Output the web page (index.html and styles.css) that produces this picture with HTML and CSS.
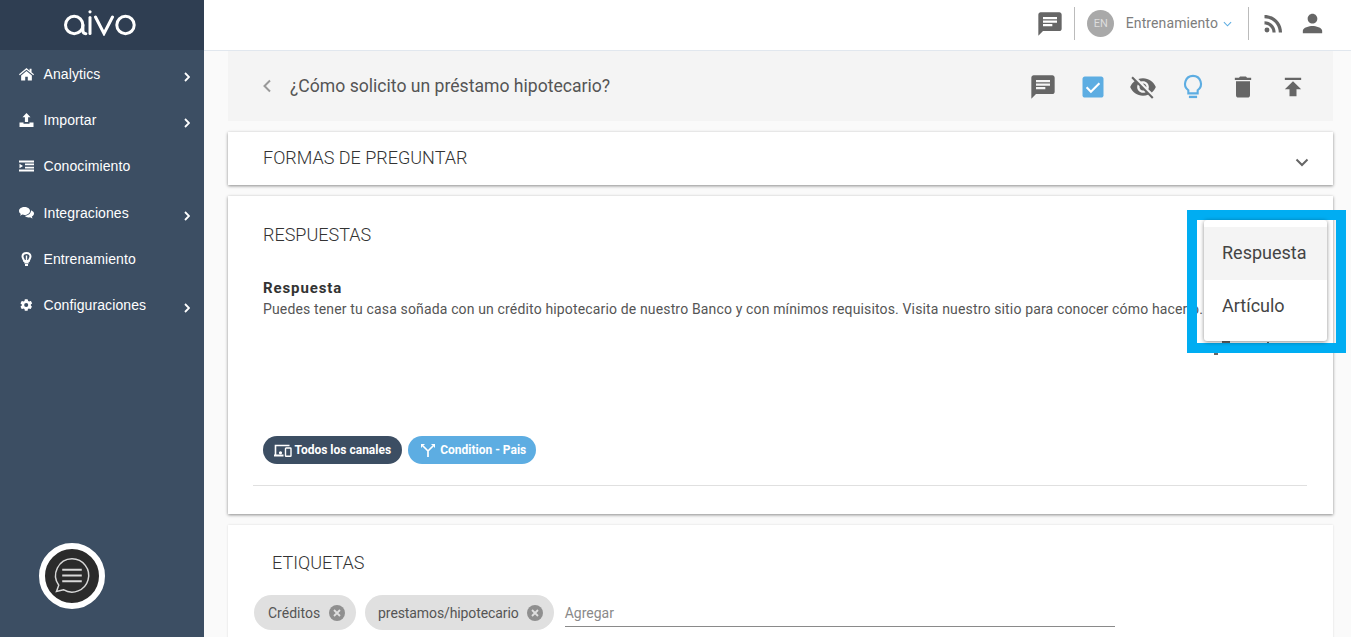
FILE: index.html
```html
<!DOCTYPE html>
<html lang="es">
<head>
<meta charset="utf-8">
<title>Aivo</title>
<link rel="stylesheet" href="styles.css">
</head>
<body>
<div class="app">
  <aside class="sidebar">
    <div class="brand">
      <svg class="logo" width="74" height="26" viewBox="0 0 74 26" fill="none" stroke="#fff" stroke-width="3" stroke-linecap="round" aria-label="aivo">
        <circle cx="10.200" cy="15" r="8.700"/>
        <path d="M18.900 15v5.500q0 3 3 3.200"/>
        <path d="M26 7.500v16"/>
        <circle cx="26" cy="1.800" r="1.600" fill="#fff" stroke="none"/>
        <path d="M31.500 7 40 23.500 48.500 7"/>
        <circle cx="61.500" cy="15" r="8.700"/>
      </svg>
    </div>
    <nav class="nav">
      <a class="nav-item"><svg class="nav-icon" viewBox="0 0 14 12"><path fill="#fff" d="M7 .5 0 6.300l.7.9L7 2l6.300 5.200.7-.9-2.300-1.900V1h-1.800v2.000zM2 7.300V12h3.800V8.500h2.400V12H12V7.300L7 3.200z"/></svg><span class="nav-label">Analytics</span><svg class="caret" viewBox="0 0 6 10"><path d="M1 1l4 4-4 4" fill="none" stroke="#fff" stroke-width="1.800"/></svg></a>
      <a class="nav-item"><svg class="nav-icon" viewBox="0 0 14 14"><path fill="#fff" d="M7 0 3 4.200h2.400V9h3.200V4.200H11zM0 9.500h4v1.200h6V9.500h4V14H0z"/></svg><span class="nav-label">Importar</span><svg class="caret" viewBox="0 0 6 10"><path d="M1 1l4 4-4 4" fill="none" stroke="#fff" stroke-width="1.800"/></svg></a>
      <a class="nav-item"><svg class="nav-icon" viewBox="0 0 15 11"><path fill="#fff" d="M0 0h15v2H0zM6 3h9v1.800H6zM6 6.200h9V8H6zM0 9h15v2H0zM.5 3.200 4 5.500.5 7.800z"/></svg><span class="nav-label">Conocimiento</span></a>
      <a class="nav-item"><svg class="nav-icon" viewBox="0 0 15 12"><path fill="#fff" d="M5.500 0C2.500 0 0 1.700 0 3.900c0 1.200.7 2.200 1.800 3L1 8.800l2.400-1.200c.7.200 1.400.3 2.100.3 3 0 5.500-1.700 5.500-4S8.500 0 5.500 0zM12 3.500c.1 3-2.800 5.100-6.200 5.300C6.600 9.900 8 10.400 9.500 10.400c.5 0 1-.1 1.500-.2l2.500 1.300-.7-1.900c1.300-.8 2.200-2 2.200-3.200 0-1.100-1-2.100-2.500-2.900z"/></svg><span class="nav-label">Integraciones</span><svg class="caret" viewBox="0 0 6 10"><path d="M1 1l4 4-4 4" fill="none" stroke="#fff" stroke-width="1.800"/></svg></a>
      <a class="nav-item"><svg class="nav-icon bulb" viewBox="0 0 14 14"><path fill="none" stroke="#fff" stroke-width="2" d="M7 1C4.500 1 3 2.700 3 4.600c0 1.700 1.400 2.700 1.700 4.400h4.600C9.600 7.300 11 6.300 11 4.600 11 2.700 9.500 1 7 1z"/><path fill="#fff" d="M4.800 10h4.400v1.400H4.800zM5.500 12h3v2h-3zM6.300 3.500h1.400v5H6.300z"/></svg><span class="nav-label">Entrenamiento</span></a>
      <a class="nav-item"><svg class="nav-icon" viewBox="0 0 24 24"><path fill="#fff" d="M19.400 13c.1-.3.100-.7.100-1s0-.7-.1-1l2.100-1.600c.2-.2.200-.4.100-.6l-2-3.500c-.1-.2-.4-.3-.6-.2l-2.500 1c-.5-.4-1.100-.7-1.700-1L14 2.400c0-.2-.2-.4-.5-.4h-4c-.2 0-.4.200-.5.400l-.4 2.700c-.6.200-1.100.6-1.700 1l-2.500-1c-.2-.1-.5 0-.6.200l-2 3.500c-.1.200-.1.400.1.600L4 11c0 .3-.1.700-.1 1s0 .7.1 1l-2.100 1.600c-.2.200-.2.400-.1.600l2 3.500c.1.200.4.300.6.200l2.500-1c.5.400 1.100.7 1.700 1l.4 2.700c0 .2.200.4.500.4h4c.2 0 .4-.2.500-.4l.4-2.700c.6-.2 1.100-.6 1.700-1l2.500 1c.2.100.5 0 .6-.2l2-3.500c.1-.2.100-.4-.1-.6zM11.500 15.500a3.500 3.500 0 1 1 0-7 3.500 3.500 0 0 1 0 7z"/></svg><span class="nav-label">Configuraciones</span><svg class="caret" viewBox="0 0 6 10"><path d="M1 1l4 4-4 4" fill="none" stroke="#fff" stroke-width="1.800"/></svg></a>
    </nav>
    <div class="side-foot">
      <div class="chat-bubble">
        <svg width="46" height="46" viewBox="0 0 40 40" fill="none" stroke="#d8d8d8">
          <path stroke-width="1.300" d="M20 5a14.500 14.500 0 1 1-7.500 26.900L6.500 33.500 8.500 28A14.500 14.500 0 0 1 20 5z"/>
          <path stroke-width="1.800" d="M11.500 14.500h17M11.500 19.500h17M11.500 24.500h17"/>
        </svg>
      </div>
    </div>
  </aside>

  <div class="main">
    <header class="topbar">
      <svg class="tb-icon" viewBox="0 0 24 24"><path fill="#666" d="M20 2H4c-1.100 0-2 .9-2 2v18l4-4h14c1.100 0 2-.9 2-2V4c0-1.100-.9-2-2-2zM6 9h12v2H6zm8 5H6v-2h8zm4-6H6V6h12z"/></svg>
      <span class="tb-sep"></span>
      <span class="avatar">EN</span>
      <span class="tb-user">Entrenamiento</span>
      <svg class="tb-chev" viewBox="0 0 10 6"><path d="M1 1l4 4 4-4" fill="none" stroke="#5dade2" stroke-width="1.200"/></svg>
      <span class="tb-sep sep-right"></span>
      <svg class="tb-icon rss" viewBox="0 0 24 24"><circle fill="#666" cx="6.200" cy="17.800" r="2.200"/><path fill="#666" d="M4 4.400v2.900c7.100 0 12.700 5.700 12.700 12.700h2.900C19.600 11.400 12.600 4.400 4 4.400zm0 5.700v2.800c3.900 0 7.100 3.200 7.100 7.100h2.800c0-5.500-4.400-9.900-9.900-9.900z"/></svg>
      <svg class="tb-icon user" viewBox="0 0 24 24"><path fill="#666" d="M12 12c2.200 0 4-1.800 4-4s-1.800-4-4-4-4 1.800-4 4 1.800 4 4 4zm0 2c-2.700 0-8 1.300-8 4v2h16v-2c0-2.700-5.300-4-8-4z"/></svg>
    </header>

    <div class="content">
      <section class="titlebar">
        <svg class="back" viewBox="0 0 10 14"><path d="M8 1.500 2.500 7 8 12.500" fill="none" stroke="#999" stroke-width="2"/></svg>
        <h1 class="title">¿Cómo solicito un préstamo hipotecario?</h1>
        <div class="actions">
          <svg class="act" viewBox="0 0 24 24"><path fill="#666" d="M20 2H4c-1.100 0-2 .9-2 2v18l4-4h14c1.100 0 2-.9 2-2V4c0-1.100-.9-2-2-2zM6 9h12v2H6zm8 5H6v-2h8zm4-6H6V6h12z"/></svg>
          <svg class="act" viewBox="0 0 24 24"><path fill="#5dade2" d="M19 3H5c-1.100 0-2 .9-2 2v14c0 1.100.9 2 2 2h14c1.100 0 2-.9 2-2V5c0-1.100-.9-2-2-2z"/><path fill="none" stroke="#fff" stroke-width="1.800" d="m6.500 12.300 3.700 3.700 7.300-7.300"/></svg>
          <svg class="act" viewBox="0 0 24 24"><path fill="#666" d="M12 7c2.760 0 5 2.240 5 5 0 .65-.13 1.260-.36 1.830l2.920 2.920c1.510-1.260 2.700-2.890 3.430-4.750-1.730-4.390-6-7.500-11-7.500-1.400 0-2.740.25-3.980.7l2.160 2.160C10.740 7.130 11.350 7 12 7zM2 4.270l2.280 2.280.46.46C3.080 8.300 1.780 10.020 1 12c1.730 4.390 6 7.500 11 7.500 1.550 0 3.030-.3 4.380-.84l.42.42L19.730 22 21 20.730 3.270 3 2 4.270zM7.530 9.800l1.550 1.550c-.05.21-.08.43-.08.65 0 1.660 1.340 3 3 3 .22 0 .44-.03.65-.08l1.550 1.550c-.67.33-1.410.53-2.200.53-2.760 0-5-2.240-5-5 0-.79.2-1.530.53-2.200zm4.310-.78l3.150 3.150.02-.16c0-1.660-1.340-3-3-3l-.17.01z"/></svg>
          <svg class="act" viewBox="0 0 24 24"><path fill="none" stroke="#5dade2" stroke-width="1.800" d="M12 2.500a6.800 6.800 0 0 0-4 12.300V17.500h8v-2.700a6.800 6.800 0 0 0-4-12.300z"/><path fill="#5dade2" d="M8.500 19.500h7v2h-7z"/></svg>
          <svg class="act" viewBox="0 0 24 24"><path fill="#666" d="M6 19c0 1.100.9 2 2 2h8c1.100 0 2-.9 2-2V7H6zM19 4h-3.500l-1-1h-5l-1 1H5v2h14z"/></svg>
          <svg class="act" viewBox="0 0 24 24"><path fill="#666" d="M5 4v2h14V4zm0 10h4v6h6v-6h4l-7-7z"/></svg>
        </div>
      </section>

      <section class="card card-forms">
        <h2 class="card-title">FORMAS DE PREGUNTAR</h2>
        <svg class="expand" viewBox="0 0 14 9"><path d="M1.500 1.500 7 7l5.500-5.500" fill="none" stroke="#666" stroke-width="2"/></svg>
      </section>

      <section class="card card-answers">
        <h2 class="card-title">RESPUESTAS</h2>
        <h3 class="answer-name">Respuesta</h3>
        <p class="answer-text">Puedes tener tu casa soñada con un crédito hipotecario de nuestro Banco y con mínimos requisitos. Visita nuestro sitio para conocer cómo hacerlo.</p>
        <div class="peek"><span class="peek-a"></span><span class="peek-b"></span><span class="peek-c"></span></div>
        <div class="badges">
          <span class="badge badge-dark">
            <svg class="badge-icon" viewBox="0 0 18 13"><path fill="none" stroke="#fff" stroke-width="1.600" d="M1.500 11.500V1.500h14"/><path fill="#fff" d="M0 10.500h9.500v2H0z"/><rect x="11.500" y="4" width="5.500" height="8.300" rx=".6" fill="#3c4e63" stroke="#fff" stroke-width="1.400"/><circle cx="6.500" cy="8.800" r="1.600" fill="#fff"/></svg>
            Todos los canales
          </span>
          <span class="badge badge-blue">
            <svg class="badge-icon fork" viewBox="0 0 14 14"><path fill="none" stroke="#fff" stroke-width="1.700" d="M7 14V8L2 3M7 8l5-5"/><path fill="#fff" d="M0 1h4L0 5zM14 1h-4l4 4z"/></svg>
            Condition - Pais
          </span>
        </div>
        <hr class="rule">
      </section>

      <section class="card card-tags">
        <h2 class="card-title tags-title">ETIQUETAS</h2>
        <div class="tags">
          <span class="tag">Créditos<span class="tag-x"><svg viewBox="0 0 16 16"><circle cx="8" cy="8" r="8" fill="#8f8f8f"/><path d="m5 5 6 6M11 5l-6 6" stroke="#e0e0e0" stroke-width="1.800"/></svg></span></span>
          <span class="tag tag-long">prestamos/hipotecario<span class="tag-x"><svg viewBox="0 0 16 16"><circle cx="8" cy="8" r="8" fill="#8f8f8f"/><path d="m5 5 6 6M11 5l-6 6" stroke="#e0e0e0" stroke-width="1.800"/></svg></span></span>
          <span class="tag-input">Agregar</span>
        </div>
      </section>
    </div>
  </div>
</div>

<div class="highlight">
  <ul class="menu">
    <li class="menu-item is-active">Respuesta</li>
    <li class="menu-item">Artículo</li>
  </ul>
</div>
</body>
</html>
```
FILE: styles.css
```css
* { box-sizing: border-box; }
html, body { margin: 0; height: 637px; overflow: hidden; }
body { font-family: Roboto, "Liberation Sans", sans-serif; color: #333; background: #fafafa; position: relative; }

.app { display: flex; height: 637px; }

/* Sidebar */
.sidebar { width: 204px; flex: none; background: #3c4e63; display: flex; flex-direction: column; }
.brand { height: 50px; background: #2f3e52; display: flex; align-items: flex-start; padding: 10px 0 0 64px; }
.nav { display: flex; flex-direction: column; padding-top: 1.300px; font-family: "Liberation Sans", Arial, sans-serif; }
.nav-item { height: 46.250px; display: flex; align-items: center; padding: 0 13px 0 19px; color: #fff; font-size: 14px; letter-spacing: .1px; }
.nav-icon { width: 15px; height: 14px; flex: none; margin-right: 9.500px; margin-top: -1px; }
.nav-label { flex: 1; margin-top: -1px; }
.caret { width: 6px; height: 10px; flex: none; margin-top: 5px; margin-right: 1px; }
.side-foot { margin-top: auto; padding: 0 0 28px 39px; }
.chat-bubble { width: 66px; height: 66px; border-radius: 50%; background: #2b2b2b; border: 6px solid #fff; display: flex; align-items: center; justify-content: center; }

/* Main */
.main { flex: 1; min-width: 0; display: flex; flex-direction: column; }
.topbar { height: 51px; flex: none; background: #fff; border-bottom: 1px solid #e1e7ee; display: flex; align-items: center; padding: 0 24px 3px 0; justify-content: flex-end; }
.tb-icon { width: 28px; height: 28px; flex: none; }
.tb-sep { width: 1px; height: 33px; background: #bbb; margin: 0 12px 0 10.500px; flex: none; }
.avatar { width: 27px; height: 27px; border-radius: 50%; background: #a9a9a9; color: #ddd; font-size: 11px; display: flex; align-items: center; justify-content: center; flex: none; margin-right: 11.500px; }
.tb-user { font-size: 14px; color: #7d7d7d; letter-spacing: .1px; margin-top: -2px; }
.tb-chev { width: 9px; height: 6px; margin-left: 5px; flex: none; }
.sep-right { margin: 0 11px 0 16px; }
.rss { width: 27px; height: 27px; }
.user { width: 29px; height: 29px; margin-left: 11px; }

.content { flex: 1; padding: 0 18px 0 24px; display: flex; flex-direction: column; gap: 11px; overflow: hidden; }
.titlebar { height: 70px; flex: none; background: #f4f4f4; display: flex; align-items: center; padding: 0 26px 0 33px; }
.back { width: 12px; height: 14px; flex: none; margin-right: 17px; }
.title { margin: 0; font-size: 17.600px; font-weight: 400; color: #555; flex: 1; }
.actions { display: flex; gap: 22px; padding-top: 1px; }
.act { width: 28px; height: 28px; flex: none; }

.card { background: #fff; flex: none; box-shadow: 0 1px 3px rgba(0,0,0,.45); position: relative; }
.card-title { margin: 0; font-size: 18px; font-weight: 300; color: #333; line-height: 20px; }
.card-forms { height: 53px; padding: 16px 35px 0; display: flex; justify-content: space-between; }
.expand { width: 14px; height: 9px; margin: 10px -11px 0 0; flex: none; }
.card-answers { height: 318px; padding: 29px 26px 0 35px; }
.answer-name { margin: 35px 0 0; font-size: 15px; font-weight: 700; color: #333; line-height: 17px; letter-spacing: .9px; }
.answer-text { margin: 4px 0 0; font-size: 14px; line-height: 17px; color: #555; white-space: nowrap; letter-spacing: .15px; overflow: visible; }
.peek { position: absolute; left: 0; top: 0; }
.peek-a, .peek-b, .peek-c { position: absolute; background: #666; }
.peek-a { left: 994px; top: 145px; width: 8px; height: 3px; }
.peek-b { left: 1039px; top: 146px; width: 2px; height: 2px; }
.peek-c { left: 986px; top: 157px; width: 4px; height: 2px; }
.badges { display: flex; gap: 6px; margin-top: 118px; }
.badge { height: 28px; border-radius: 14px; color: #fff; font-size: 12px; font-weight: 700; display: flex; align-items: center; padding: 0 10.500px; }
.badge-dark { background: #3c4e63; }
.badge-blue { background: #5dade2; padding-right: 10px; }
.badge-icon { width: 18px; height: 13px; margin-right: 3px; flex: none; }
.fork { width: 14px; height: 14px; margin-left: 3px; margin-right: 5px; }
.rule { border: 0; border-top: 1px solid #e0e0e0; margin: 21px 0 0 -10px; }

.card-tags { height: 140px; padding: 28px 26px 0 26px; box-shadow: 0 0 2px rgba(0,0,0,.12); }
.tags-title { padding-left: 18px; }
.tags { display: flex; align-items: center; gap: 9px; margin-top: 22px; }
.tag { height: 35px; border-radius: 18px; background: #e0e0e0; display: flex; align-items: center; padding: 0 11px 0 14px; font-size: 14px; color: #555; }
.tag-long { padding-left: 13px; letter-spacing: -.1px; }
.tag-x { width: 16px; height: 16px; margin-left: 9px; display: flex; }
.tag-long .tag-x { margin-left: 8px; }
.tag-input { width: 550px; margin-left: 2px; height: 28px; border-bottom: 1px solid #8a8a8a; color: #8a8a8a; font-size: 14px; line-height: 28px; }

/* Dropdown with highlight frame */
.highlight { position: absolute; left: 1187px; top: 210px; width: 159px; height: 143px; border: 10px solid #00adf2; padding-left: 7px; }
.menu { list-style: none; margin: 0; padding: 7px 0 8px; width: 123px; height: 121px; background: #fff; border-radius: 3px; box-shadow: 0 1px 4px rgba(0,0,0,.45); }
.menu-item { height: 53px; padding-left: 18px; line-height: 52px; font-size: 18px; color: #444; }
.is-active { background: #f4f4f4; }
```
